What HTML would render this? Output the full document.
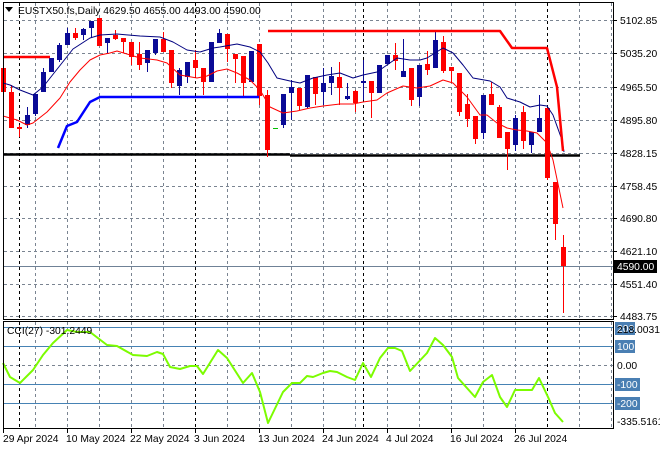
<!DOCTYPE html>
<html><head><meta charset="utf-8"><style>
html,body{margin:0;padding:0;background:#fff;width:660px;height:450px;overflow:hidden}
svg{display:block;font-family:"Liberation Sans",sans-serif;font-size:10.3px}
</style></head><body>
<svg id="s" width="660" height="450" xmlns="http://www.w3.org/2000/svg"></svg>
<script>
var o='';
function L(x1,y1,x2,y2,c,w,d){o+='<line x1="'+x1+'" y1="'+y1+'" x2="'+x2+'" y2="'+y2+'" stroke="'+c+'" stroke-width="'+(w||1)+'"'+(d?' stroke-dasharray="'+d+'"':'')+'/>';}
function P(pts,c,w){o+='<polyline fill="none" stroke="'+c+'" stroke-width="'+w+'" stroke-linejoin="round" points="'+pts+'"/>';}
function T(x,y,t,c,a){o+='<text x="'+x+'" y="'+y+'" fill="'+(c||'#000')+'"'+(a?' text-anchor="'+a+'"':'')+'>'+t+'</text>';}
var G='#7a8491';
[20,53,87,120,153,186,218,251,284,316].forEach(function(y){L(4,y+.5,613,y+.5,G,1,'3,3');});
for(var x=35;x<613;x+=32){if(x==195||x==547)continue;L(x+.5,3,x+.5,319,G,1,'3,3');L(x+.5,322,x+.5,428,G,1,'3,3');}
[19,195,363,547].forEach(function(x){L(x+.5,3,x+.5,319,'#000',1,'3,3');L(x+.5,322,x+.5,428,'#000',1,'3,3');});
[327,346,384,403].forEach(function(y){L(4,y+.5,613,y+.5,'#4682b4',1);});
L(4,365.5,613,365.5,G,1,'3,3');
L(4,266.5,613,266.5,'#6f8196',1);
L(4,154.5,290,154.5,'#000',2.5);L(290,155.5,580,155.5,'#000',2.5);
var C=[[3,'r',68,92,66,92],[11,'r',92,128,85,128],[19,'r',127,129,125,137],[27,'b',115,125,107,128],[35,'b',94,114,94,116],[43,'b',72,92,68,92],[51,'b',58,72,58,72],[59,'b',45,60,43,62],[67,'b',33,45,28,45],[75,'r',33,38,28,40],[83,'b',29,35,28,40],[91,'b',21,28,21,38],[99,'r',18,46,18,46],[107,'b',38,43,38,53],[115,'r',35,39,30,40],[123,'r',38,42,38,53],[131,'r',42,57,42,65],[139,'r',54,65,42,70],[147,'b',50,63,50,72],[155,'b',39,53,39,55],[163,'r',39,52,32,52],[171,'r',50,83,50,88],[179,'b',70,86,68,95],[187,'b',62,77,62,83],[195,'r',60,68,50,77],[203,'r',68,82,68,95],[211,'b',42,82,42,82],[219,'b',33,43,29,43],[227,'r',34,49,34,62],[235,'r',54,59,54,83],[243,'r',56,83,56,97],[251,'b',51,82,51,82],[259,'r',44,96,44,105],[267,'r',95,150,90,157],[283,'b',94,125,94,128],[291,'b',87,93,80,120],[299,'r',88,106,88,110],[307,'b',75,107,75,108],[315,'r',77,94,77,105],[323,'b',83,92,68,105],[331,'b',76,83,67,95],[339,'r',77,88,62,105],[347,'b',96,99,83,100],[355,'r',91,103,90,112],[363,'b',81,83,60,100],[371,'r',81,93,81,118],[379,'b',65,93,65,93],[387,'b',55,64,55,64],[395,'r',55,61,43,70],[403,'b',71,77,39,77],[411,'r',68,100,68,106],[419,'b',65,97,65,106],[427,'r',64,70,51,75],[435,'b',40,68,30,68],[443,'r',42,71,36,73],[451,'r',67,71,67,82],[459,'r',73,112,73,116],[467,'r',104,119,94,127],[475,'r',116,139,116,144],[483,'b',95,133,95,139],[491,'r',94,105,82,105],[499,'r',107,138,105,138],[507,'r',132,149,132,170],[515,'b',118,145,115,151],[523,'r',112,141,106,149],[531,'b',132,145,132,153],[539,'b',118,132,95,132],[547,'r',108,178,108,180],[555,'r',182,224,182,240],[563,'r',247,266,235,313]];
C.forEach(function(c){var col=c[1]=='r'?'#ff0000':'#0a0a96';L(c[0]+.5,c[4],c[0]+.5,c[5],col,1);o+='<rect x="'+(c[0]-2)+'" y="'+c[2]+'" width="5" height="'+Math.max(1,c[3]-c[2])+'" fill="'+col+'"/>';});
P('3,83 10,85 20,90 33,95 43,87 58,68 73,49 90,38 100,35 117,34 140,36 160,37 173,42 187,50 200,52 213,48 220,47 237,44 250,47 260,52 268,63 277,78 290,81 300,83 313,78 327,75 340,73 353,78 363,75 377,72 387,65 397,58 410,60 420,60 427,58 443,48 453,53 463,65 473,78 490,81 500,87 507,98 520,102 530,107 540,105 547,106 553,115 562,140 564,152','#000080',1);
P('3,116 17,120 27,125 33,123 47,112 60,98 70,82 80,70 90,60 100,55 110,53 117,51 127,54 140,58 157,60 167,63 180,75 197,78 207,76 217,71 227,69 237,73 250,80 260,90 270,107 283,113 297,111 310,108 323,106 340,104 353,104 363,102 377,100 387,93 403,86 417,88 430,86 443,80 453,83 467,97 480,115 487,115 497,123 507,128 517,130 527,131 537,133 547,143 553,160 563,208','#ff0000',1);
P('4,57 50,57','#ff0000',2.5);
P('268,31 500,31 512,48 547,48 557,87 563,151','#ff0000',2.5);
P('58,148 67,126 77,122 90,102 100,97 259,97','#0000ff',2.5);
L(273,128.5,278,128.5,'#00c000',1);
P('3,363 10,377 20,383 33,370 43,355 53,343 67,330 77,332 90,332 107,345 117,346 133,355 147,356 157,352 163,354 170,367 180,369 190,366 197,366 203,374 218,350 227,358 243,383 252,373 260,392 268,423 283,392 292,383 300,383 307,376 313,377 323,373 330,371 337,372 347,377 355,380 363,363 371,377 380,358 388,348 395,348 402,351 410,371 427,353 435,338 443,345 452,357 458,378 475,397 483,382 492,375 500,397 507,407 515,390 532,390 539,378 548,397 555,413 563,422','#7cfc00',2);
o+='<rect x="3.5" y="2.5" width="610" height="317" fill="none" stroke="#000"/>';
o+='<rect x="3.5" y="321.5" width="610" height="107" fill="none" stroke="#000"/>';
var pl=[[20,'5102.85'],[53,'5035.20'],[87,'4965.50'],[120,'4895.80'],[153,'4828.15'],[186,'4758.45'],[218,'4690.80'],[251,'4621.10'],[284,'4551.40'],[316,'4483.75']];
pl.forEach(function(p){L(613,p[0]+.5,617,p[0]+.5,'#000',1);T(620,p[0]+4,p[1]);});
o+='<rect x="614" y="260" width="43" height="13" fill="#000"/>';T(617,270,'4590.00','#fff');
function B(y,t,w){o+='<rect x="615" y="'+(y-6)+'" width="'+w+'" height="13" fill="#4a7fb3"/>';T(617,y+4,t,'#fff');}
B(328,'200',20);T(617,333,'218.0031');B(346,'100',20);T(617,369,'0.00');B(384,'-100',25);B(403,'-200',25);T(617,425,'-335.5161');
[[3,'29 Apr 2024'],[67,'10 May 2024'],[131,'22 May 2024'],[195,'3 Jun 2024'],[259,'13 Jun 2024'],[323,'24 Jun 2024'],[387,'4 Jul 2024'],[451,'16 Jul 2024'],[515,'26 Jul 2024']].forEach(function(d){L(d[0]+.5,429,d[0]+.5,433,'#000',1);T(d[0]+(d[0]==3?0:-1),442,d[1]);});
o+='<polygon points="5,7 13,7 9,12" fill="#000"/>';
T(18,14,'EUSTX50.fs,Daily  4629.50 4655.00 4493.00 4590.00');
T(7,334,'CCI(27) -301.2449');
document.getElementById('s').innerHTML=o;
</script>
</body></html>
